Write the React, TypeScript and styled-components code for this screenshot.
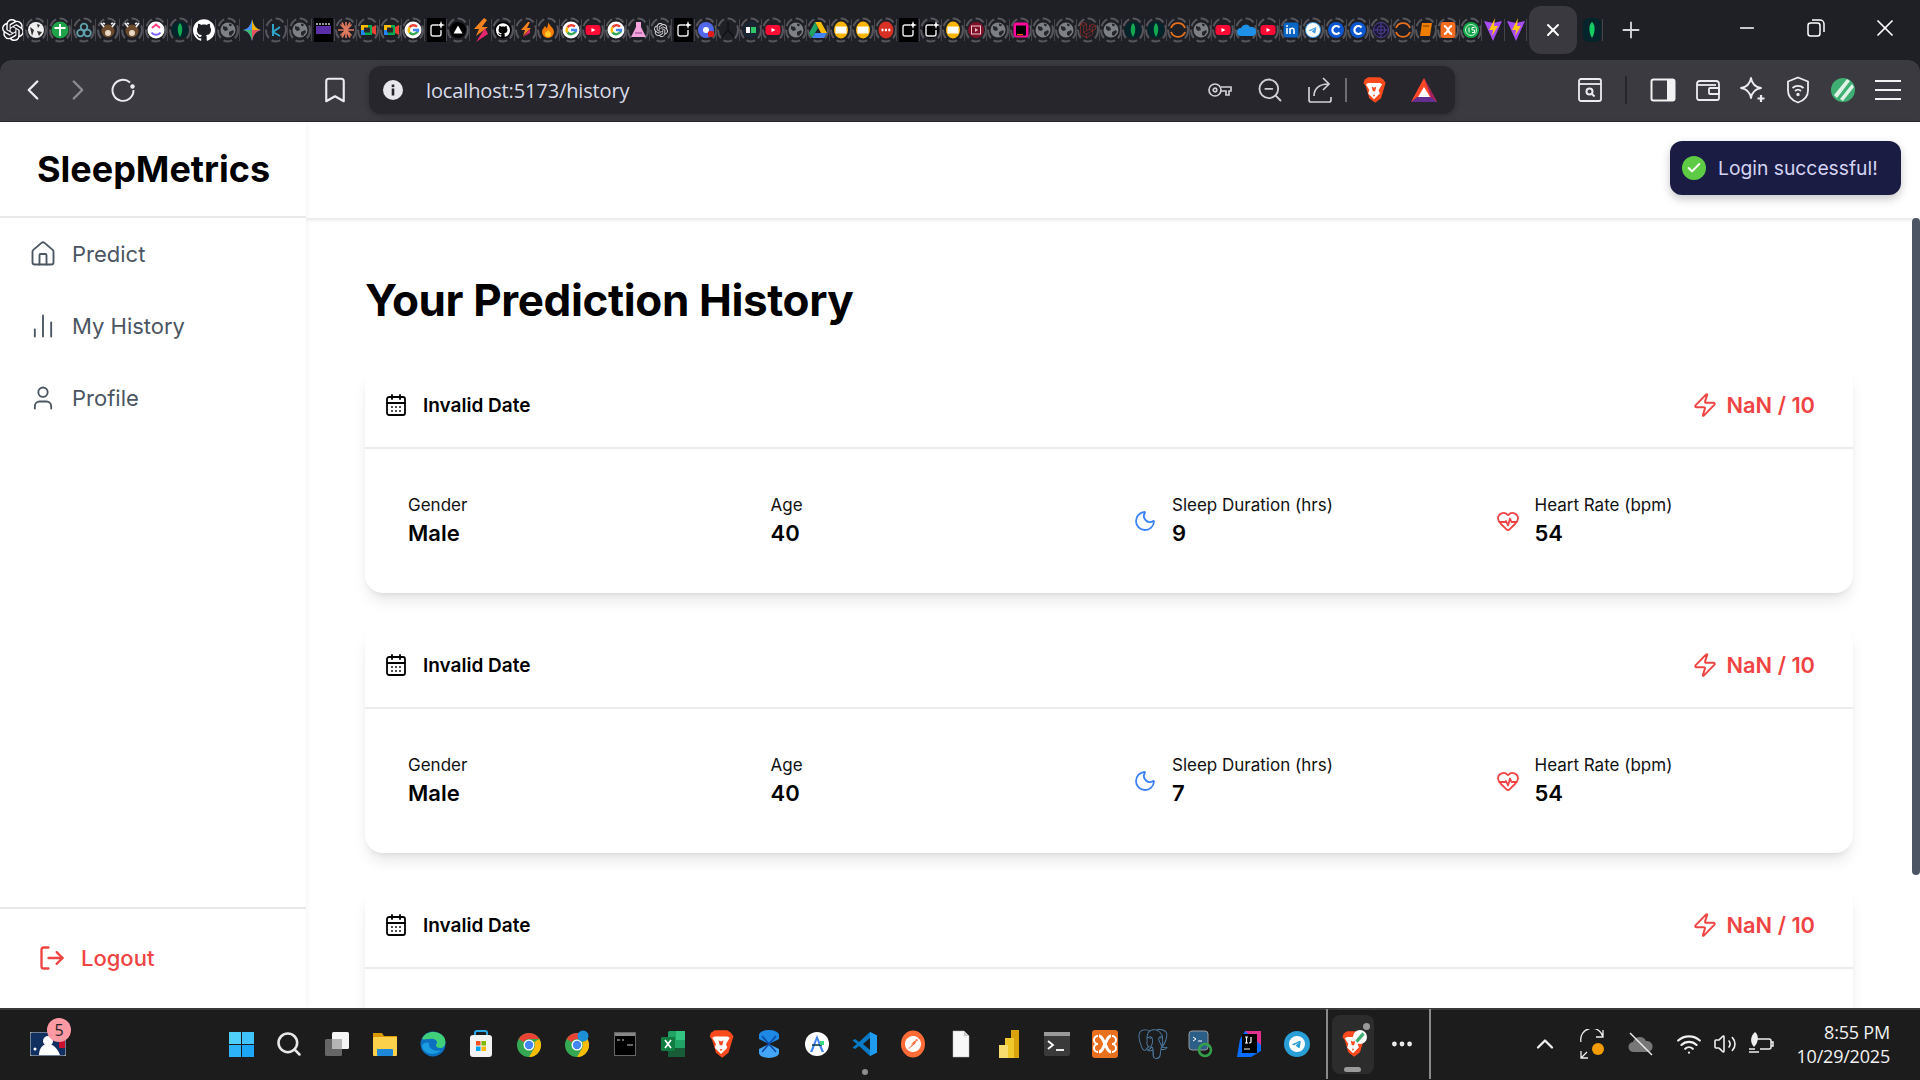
import React from 'react';
import styled, { createGlobalStyle } from 'styled-components';
import {
  House, ChartNoAxesColumn, User, LogOut, CalendarDays, Zap, Moon, HeartPulse,
  ChevronLeft, ChevronRight, Bookmark, ZoomOut, X, Plus, Minus,
  Search, ChevronUp, Wifi, Volume2, Ellipsis, Check,
} from 'lucide-react';
import { SiOpenai, SiGithub, SiLaravel, SiPostman, SiTelegram, SiPostgresql } from 'react-icons/si';

const Global = createGlobalStyle`
  html, body { margin: 0; padding: 0; height: 100%; overflow: hidden; background: #fff; }
  * { box-sizing: border-box; }
  #root { width: 1920px; height: 1080px; }
`;

const Frame = styled.div`
  width: 1920px; height: 1080px; display: flex; flex-direction: column; overflow: hidden;
  background: #1f1f26; font-family: Inter, "Liberation Sans", sans-serif; position: relative;
`;

/* ---------- tab strip ---------- */
const TabStrip = styled.div`
  height: 60px; flex: none; display: flex; align-items: flex-start; color: #fff;
`;
const TabSlot = styled.div<{ $w: number }>`
  width: ${p => p.$w}px; height: 48px; margin-top: 6px; flex: none; display: flex; align-items: center;
  justify-content: center; position: relative;
  &::after { content: ''; position: absolute; right: 0; top: 13px; height: 22px; width: 1px; background: #44444a; }
`;
const ActiveTab = styled.div`
  width: 48px; height: 48px; margin: 6px 3px 0 2px; border-radius: 12px; background: #39393f; flex: none;
  display: flex; align-items: center; justify-content: center; color: #fff;
`;
const PlusSlot = styled.div`
  width: 56px; height: 48px; margin: 6px 0 0 0; flex: none; display: flex; align-items: center; justify-content: center; color: #d8d8dc;
`;
const WinControls = styled.div`margin-left: auto; display: flex; height: 60px;`;
const WinButton = styled.div<{ $w: number }>`
  width: ${p => p.$w}px; display: flex; align-items: center; justify-content: center; color: #fff; padding-bottom: 4px;
`;

/* ---------- toolbar ---------- */
const Toolbar = styled.div`
  height: 62px; flex: none; display: flex; align-items: center; background: #3a3a40; padding: 0 10px 1px 10px;
  border-radius: 12px 12px 0 0; border-bottom: 1px solid #2b2b30; color: #e6e6ea;
`;
const ToolButton = styled.div<{ $dim?: boolean }>`
  width: 45px; height: 45px; flex: none; display: flex; align-items: center; justify-content: center;
  color: ${p => (p.$dim ? '#8b8b90' : '#ececf0')};
`;
const BookmarkSlot = styled(ToolButton)`margin-left: 167px;`;
const UrlBar = styled.div`
  width: 1086px; height: 48px; margin-left: 12px; flex: none; background: #26262c; border-radius: 12px;
  display: flex; align-items: center; padding: 0 6px 0 14px; box-shadow: 0 2px 6px rgba(0,0,0,.25);
`;
const UrlText = styled.div`
  margin-left: 23px; font: 400 20px "Open Sans", sans-serif; letter-spacing: -0.13px; color: #d9dbe8;
`;
const UrlTools = styled.div`margin-left: auto; display: flex; align-items: center;`;
const UrlSlot = styled.div`
  width: 50px; height: 40px; display: flex; align-items: center; justify-content: center; color: #cfcfd4;
`;
const VBar = styled.div<{ $c?: string; $h?: number; $ml?: number; $mr?: number }>`
  width: 2px; flex: none; height: ${p => p.$h ?? 24}px; background: ${p => p.$c ?? '#6d6d72'};
  margin-left: ${p => p.$ml ?? 0}px; margin-right: ${p => p.$mr ?? 0}px;
`;
const ToolsRight = styled.div`margin-left: auto; display: flex; align-items: center;`;

/* ---------- application ---------- */
const AppArea = styled.div`flex: 1; min-height: 0; display: flex; background: #fff; position: relative;`;
const Sidebar = styled.aside`
  width: 306px; flex: none; display: flex; flex-direction: column; background: #fff; z-index: 2;
  box-shadow: 1px 0 6px rgba(0,0,0,.05);
`;
const Brand = styled.div`
  height: 96px; flex: none; border-bottom: 2px solid #e8e8ea; display: flex; align-items: center; justify-content: center;
  font-weight: 700; font-size: 36px; color: #000; padding: 0 0 1px 1px;
`;
const Nav = styled.nav`display: flex; flex-direction: column;`;
const NavItem = styled.div`
  height: 72px; display: flex; align-items: center; gap: 15px; padding: 0 0 1px 29px; color: #4b5563; font-size: 22px; font-weight: 400;
`;
const SidebarFoot = styled.div`
  margin-top: auto; height: 101px; border-top: 2px solid #e8e8ea; display: flex; align-items: center; gap: 15px;
  padding: 0 0 1px 38px; color: #ef4444; font-size: 22px; font-weight: 500;
`;
const MainColumn = styled.div`flex: 1; min-width: 0; display: flex; flex-direction: column;`;
const TopBar = styled.header`
  height: 96px; flex: none; background: #fff; box-shadow: 0 1px 5px rgba(0,0,0,.14); z-index: 1;
`;
const Scroller = styled.main`
  flex: 1; min-height: 0; overflow: hidden; padding: 49px 67px 48px 59px;
`;
const ScrollThumb = styled.div`
  position: absolute; right: 0; top: 96px; width: 8px; height: 657px; border-radius: 5px; background: #4b5563; z-index: 3;
`;
const Title = styled.h1`
  margin: 0 0 31px; font-size: 44px; line-height: 67px; font-weight: 700; color: #000; letter-spacing: -0.38px;
`;
const Cards = styled.div`display: flex; flex-direction: column; gap: 32px;`;
const Card = styled.section`
  background: #fff; border-radius: 18px; height: 228px; flex: none; display: flex; flex-direction: column;
  box-shadow: 0 10px 15px -3px rgba(0,0,0,.1), 0 4px 6px -4px rgba(0,0,0,.1);
`;
const CardHead = styled.div`
  height: 84px; flex: none; border-bottom: 2px solid #ececee; display: flex; align-items: center; justify-content: space-between;
  padding: 0 38px 2px 19px;
`;
const DateGroup = styled.div`display: flex; align-items: center; gap: 15px; font-size: 19px; font-weight: 600; color: #000;`;
const ScoreGroup = styled.div`display: flex; align-items: center; gap: 9px; font-size: 21.8px; font-weight: 600; color: #ef4444; padding-bottom: 1px;`;
const CardBody = styled.div`
  flex: 1; display: grid; grid-template-columns: repeat(4, 1fr); column-gap: 48px; padding: 0 43px 1px; align-items: center;
`;
const Stat = styled.div`display: flex; align-items: center; gap: 15px;`;
const StatIcon = styled.div<{ $c: string }>`color: ${p => p.$c}; display: flex; margin-top: 1px;`;
const StatLabel = styled.div`font-size: 17px; line-height: 24px; color: #111; font-weight: 400; padding-top: 1px;`;
const StatValue = styled.div`font-size: 22px; line-height: 32px; color: #000; font-weight: 600;`;

const Toast = styled.div`
  position: absolute; top: 19px; right: 19px; width: 231px; height: 54px; border-radius: 12px; background: #1b1c44; z-index: 5;
  display: flex; align-items: center; gap: 12px; padding: 0 0 1px 12px; color: #d4d4f2; font-size: 19.3px; font-weight: 400;
  box-shadow: 0 4px 10px rgba(0,0,0,.22);
`;
const ToastCheck = styled.div`
  width: 24px; height: 24px; border-radius: 50%; background: #5ecb45; color: #fff; display: flex; align-items: center; justify-content: center;
`;

/* ---------- taskbar ---------- */
const Taskbar = styled.footer`
  height: 72px; flex: none; background: #1c1c1c; border-top: 2px solid #3a3a3a; display: flex; align-items: center; color: #eee; position: relative; padding-bottom: 2px;
`;
const MlbSlot = styled.div`width: 217px; flex: none; padding-left: 30px; display: flex; position: relative;`;
const Badge = styled.div`
  position: absolute; left: 47px; top: -14px; width: 24px; height: 24px; border-radius: 50%; background: #ff9aa5; color: #222;
  font: 400 16px "Open Sans", sans-serif; display: flex; align-items: center; justify-content: center;
`;
const TaskIcon = styled.div`
  width: 48px; height: 48px; flex: none; display: flex; align-items: center; justify-content: center; position: relative;
`;
const RunningDot = styled.div`
  position: absolute; bottom: -7px; left: 21px; width: 6px; height: 6px; border-radius: 50%; background: #8f8f8f;
`;
const TaskDivider = styled.div<{ $ml: number }>`width: 2px; height: 70px; background: #8a8a8a; flex: none; margin-left: ${p => p.$ml}px;`;
const ActiveApp = styled.div`
  width: 42px; height: 59px; flex: none; margin-left: 4px; border-radius: 8px; background: #2c2c2c; position: relative;
  display: flex; align-items: center; justify-content: center;
`;
const ActiveDot = styled.div`position: absolute; right: 4px; top: 8px; width: 7px; height: 7px; border-radius: 50%; background: #9a9a9a;`;
const ActivePill = styled.div`position: absolute; bottom: 2px; left: 12px; width: 17px; height: 5px; border-radius: 3px; background: #9a9a9a;`;
const MoreSlot = styled.div`width: 55px; flex: none; display: flex; justify-content: center; color: #eee;`;
const Tray = styled.div`margin-left: 90px; display: flex; align-items: center;`;
const TraySlot = styled.div<{ $w: number }>`width: ${p => p.$w}px; flex: none; display: flex; justify-content: center; align-items: center; color: #eee;`;
const Clock = styled.div`
  margin-left: auto; padding-right: 30px; text-align: right; font: 400 18px/24px "Open Sans", sans-serif; color: #f2f2f2; letter-spacing: -0.2px;
`;

/* ---------- drawings ---------- */
const BraveLogo = ({ s = 28, mark = false }: { s?: number; mark?: boolean }) => (
  <svg width={s} height={s} viewBox="0 0 24 24" style={{ display: 'block' }}>
    <path d="M4 3l3-2h10l3 2 2 3-1 3-3 10-5 4-5-4L5 9 3 6z" fill="#fb4a1e" />
    <path d="M7 6h10l2 1-3 5 1 3-5 5-5-5 1-3-3-5z" fill="#fff" />
    <path d="M10 9l2 1 2-1-1 4h-2zM11 16h2l-1 2z" fill="#fb4a1e" />
    {mark && <g><circle cx="18" cy="6" r="6" fill="#fff" /><path d="M14 9l6-7 2 2-6 7z" fill="#3fae72" /></g>}
  </svg>
);
const BatLogo = () => (
  <svg width="28" height="26" viewBox="0 0 28 26">
    <path d="M14 1L1 25h26z" fill="#ff4724" />
    <path d="M14 1l13 24-6-5z" fill="#9e1f63" />
    <path d="M1 25h26l-6-5H7z" fill="#662d91" />
    <path d="M14 10l6 10H8z" fill="#fff" />
  </svg>
);
const Stripes = ({ s = 24 }: { s?: number }) => (
  <svg width={s} height={s} viewBox="0 0 24 24">
    <circle cx="12" cy="12" r="12" fill="#3fae72" />
    <path d="M3 17L16 1l3 2L6 20zM9 21L21 6l2 3-11 14z" fill="#dff3e6" />
  </svg>
);
const Reload = () => (
  <svg width="28" height="28" viewBox="0 0 28 28" fill="none" stroke="#ececf0" strokeWidth="1.900">
    <path d="M21 6.500A10.500 10.500 0 1 0 24.500 14" />
    <circle cx="23.500" cy="10.500" r="2.200" fill="#ececf0" stroke="none" />
  </svg>
);

const GLogo = () => (
  <g fill="none" strokeWidth="2.400">
    <circle cx="11" cy="12" r="8.500" fill="#fff" stroke="none" />
    <path d="M15 8.600A5 5 0 0 0 7.500 9.300" stroke="#ea4335" />
    <path d="M7.500 9.300a5 5 0 0 0 0 5.400" stroke="#fbbc05" />
    <path d="M7.500 14.700A5 5 0 0 0 15.500 13.500" stroke="#34a853" />
    <path d="M11 12h5a5 5 0 0 1-.5 2" stroke="#4285f4" />
  </g>
);
const Yt = () => (<g><rect x="3.500" y="7" width="15" height="10" rx="3" fill="#ff0a35" /><path d="M9.500 10l4 2-4 2z" fill="#fff" /></g>);
const Globe = () => (
  <g><circle cx="11" cy="12" r="7.500" fill="#7d8085" /><path d="M6 8l4 1 1 3-3 1-2-2zM12 14l4-2 1 2-3 4-2-1zM12 5.500l3 1-1 2-2-1z" fill="#26262c" /></g>
);
const Sheet = ({ c }: { c: string }) => (<g><ellipse cx="11" cy="12" rx="7" ry="8.500" fill={c} /><rect x="5.500" y="8.500" width="11" height="7" fill="#fff" /></g>);
const Mongo = () => (<g><circle cx="11" cy="12" r="8.500" fill="#04242b" /><path d="M11 5c3 3 3 9 0 14-3-5-3-11 0-14z" fill="#13aa52" /></g>);
const Sparkle = ({ bg = true }: { bg?: boolean }) => (
  <g>
    {bg ? <rect x="2" y="0" width="19" height="24" fill="#000" /> : <circle cx="11" cy="12" r="8" fill="#000" />}
    <path d="M13 7H8a2 2 0 0 0-2 2v7a2 2 0 0 0 2 2h6a2 2 0 0 0 2-2v-4" fill="none" stroke="#eee" strokeWidth="1.400" />
    <path d="M16 3l1 3 3 1-3 1-1 3-1-3-3-1 3-1z" fill="#fff" />
  </g>
);
const Arcs = () => (<g fill="none" stroke="#e8711c" strokeWidth="1.800"><path d="M4 10a7.500 7.500 0 0 1 14 0" /><path d="M4 14a7.500 7.500 0 0 0 14 0" /></g>);
const Vite = () => (<g><path d="M2 3l9 2 9-2-9 20z" fill="#a64cf4" /><path d="M13 0L7 12h4l-1 6 6-10h-4z" fill="#ffc517" /></g>);
const Meet = () => (<g><rect x="4" y="7" width="11" height="10" fill="#00a94f" /><path d="M4 7h7v5H4z" fill="#fbbc04" /><path d="M4 12h4v5H4z" fill="#2684fc" /><path d="M15 9l4-2v10l-4-2z" fill="#ea4335" /><rect x="7" y="9.500" width="6" height="5" fill="#24242a" /></g>);
const FireBolt = ({ big }: { big?: boolean }) => (
  <g><path d={big ? 'M14 0L4 11h5L6 18l12-9h-6l5-7z' : 'M13 4L6 12h4l-2 6 8-8h-4l3-6z'} fill="#f5821f" /><path d={big ? 'M15 10L6 24l12-8z' : 'M15 11l-7 8 7-4z'} fill="#e4276b" /></g>
);
const CLogo = () => (<g><circle cx="11" cy="12" r="8" fill="#0b57d0" /><path d="M14.500 9.500a4 4 0 1 0 0 5" fill="none" stroke="#fff" strokeWidth="2.200" /></g>);

const favs: Record<string, React.ReactNode> = {
  gpt: <SiOpenai x={1} y={1} size={22} color="#fff" />,
  blob: <g><circle cx="11" cy="12" r="8" fill="#eee" /><path d="M5 9l4 3-2 6zM12 6l3 1-2 3zM12 13l5 1-3 4z" fill="#33302e" /></g>,
  plus: <g><circle cx="11" cy="12" r="8.500" fill="#1fa24a" /><path d="M11 6v12M5.500 10h11" stroke="#fff" strokeWidth="1.800" /></g>,
  rings: <g fill="none" stroke="#5fa3ad" strokeWidth="1.800"><circle cx="11" cy="9" r="3.300" /><circle cx="7.500" cy="15" r="3.300" /><circle cx="14.500" cy="15" r="3.300" /></g>,
  bull: <g><circle cx="11" cy="13" r="6.500" fill="#6c4a2d" /><path d="M4 5l3 4M18 5l-3 4M6 5l2 1M16 5l-2 1" stroke="#eee" strokeWidth="1.800" /><circle cx="11" cy="15" r="3" fill="#e8d8c4" /></g>,
  click: <g><circle cx="11" cy="12" r="8.500" fill="#fff" /><path d="M7 10l4-3.500 4 3.500" fill="none" stroke="#ff3d7f" strokeWidth="2" /><path d="M6.500 14.500a5.500 5.500 0 0 0 9 0" fill="none" stroke="#7b5cff" strokeWidth="2" /></g>,
  mongo: <Mongo />,
  mongoBare: <g><rect x="2" y="0" width="18" height="24" rx="6" fill="#04242b" /><path d="M11 4c3.500 3 3.500 10 0 16-3.500-6-3.500-13 0-16z" fill="#13cc62" /></g>,
  ghbig: <SiGithub x={0} y={1} size={22} color="#fff" />,
  globe: <Globe />,
  gem: <g><path d="M11 1c1 6 4 10 9 11-5 1-8 5-9 11-1-6-4-10-9-11 5-1 8-5 9-11z" fill="#4b8df8" /><path d="M11 1c1 6 4 10 9 11h-9z" fill="#f4b400" /><path d="M11 23c1-6 4-10 9-11h-9z" fill="#e8545c" /><path d="M11 23c-1-6-4-10-9-11h9z" fill="#3dba76" /></g>,
  k: <g><path d="M8 6v12M15 9l-7 5 7 4" fill="none" stroke="#2fa4c7" strokeWidth="2" /></g>,
  pixel: <g><rect x="2" y="0" width="19" height="24" fill="#000" /><rect x="4" y="8" width="15" height="8" fill="#5a2ea6" /><path d="M4 6h15" stroke="#9a9a9a" strokeDasharray="2 1" strokeWidth="2" /></g>,
  star: <g stroke="#e07a5f" strokeWidth="1.600"><path d="M11 4v16M3 12h16M5.500 6.500l11 11M16.500 6.500l-11 11M7 4.500l8 15M15 4.500l-8 15" /></g>,
  meet: <Meet />,
  g: <GLogo />,
  spark: <Sparkle />,
  sparkr: <Sparkle bg={false} />,
  tri: <g><circle cx="11" cy="12" r="8" fill="#000" /><path d="M11 7.500l4.500 8h-9z" fill="#fff" /></g>,
  fire: <FireBolt big />,
  gh: <g><circle cx="11" cy="12" r="8.500" fill="#000" /><SiGithub x={4} y={5} size={14} color="#fff" /></g>,
  bolt: <FireBolt />,
  flame: <g><path d="M11 4c1 3 6 6 6 10a6 6 0 0 1-12 0c0-3 2-4 3-6 1 1 1 2 2 2 1-2 1-4 1-6z" fill="#f57c00" /><path d="M11 12c2 2 3 3 3 4a3 3 0 0 1-6 0c0-2 2-2 3-4z" fill="#ffca28" /></g>,
  yt: <Yt />,
  flask: <g><path d="M9 4h5v5l5 10H4l5-10z" fill="#f3a4dc" /><path d="M8 15h7" stroke="#8e3a80" /></g>,
  gptg: <SiOpenai x={4} y={5} size={14} color="#ddd" />,
  dup: <g><circle cx="11" cy="12" r="8" fill="#5368e8" /><circle cx="11" cy="12" r="3" fill="#fff" /><rect x="13" y="13" width="6" height="6" rx="2" fill="#e21b1b" /></g>,
  aa: <g stroke="#111" strokeWidth="1.400" fill="none"><path d="M11 4v8l-6 7M11 12l6 7" /></g>,
  h: <g><circle cx="11" cy="12" r="8.500" fill="#1a2432" /><rect x="6" y="9" width="4" height="6" fill="#fff" /><rect x="11" y="9" width="5" height="6" fill="#32c766" /></g>,
  drive: <g><path d="M8 4h6l6 11h-6z" fill="#fbbc04" /><path d="M8 4l-6 11 3 5 6-10z" fill="#1fa463" /><path d="M5 20h12l3-5H8z" fill="#4285f4" /></g>,
  yellow: <Sheet c="#fbb400" />,
  dots: <g><ellipse cx="11" cy="12" rx="7.500" ry="8.500" fill="#d93025" /><path d="M6.500 12h9" stroke="#fff" strokeWidth="2.400" strokeDasharray="2 1.400" /></g>,
  wine: <g><circle cx="11" cy="12" r="8" fill="#7d1128" /><rect x="6.500" y="8" width="9" height="8" fill="none" stroke="#f2c3cc" /><path d="M10 10l3 2-3 2z" fill="#f2c3cc" /></g>,
  jet: <g><rect x="3.500" y="4.500" width="15" height="15" rx="3" fill="#ff0a9c" /><rect x="6" y="7.500" width="10" height="10" fill="#000" /><rect x="7" y="16" width="6" height="1.200" fill="#ff5e00" /></g>,
  laravel: <SiLaravel x={3} y={4} size={16} color="#b3332c" />,
  cloud: <path d="M6 18a4 4 0 0 1 0-8 5 5 0 0 1 9-1 4.500 4.500 0 0 1 3 9z" fill="#1e90e8" />,
  arcs: <Arcs />,
  in: <g><rect x="3.500" y="4.500" width="15" height="15" rx="3" fill="#0a66c2" /><path d="M7 10v6M10 16v-6M10 12c1-2.500 4-2 4 0v4" fill="none" stroke="#fff" strokeWidth="1.600" /><circle cx="7" cy="8" r="1" fill="#fff" /></g>,
  tg: <g><circle cx="11" cy="12" r="8" fill="#4a9fe8" /><SiTelegram x={4} y={5} size={14} color="#fff" /></g>,
  c: <CLogo />,
  web3: <g fill="none" stroke="#4c3f8f"><circle cx="11" cy="12" r="7.500" fill="#1d1836" /><circle cx="11" cy="12" r="4" /><path d="M11 4.500v15M3.500 12h15" /></g>,
  book: <g><path d="M7 5h10l-2 13H5z" fill="#ef7d00" /><path d="M8 8h6" stroke="#7d4100" /></g>,
  xampp: <g><rect x="3.500" y="4" width="15" height="16" rx="3" fill="#f26d21" /><path d="M7 8c2 0 3 2 4 4s2 4 4 4M15 8c-2 0-3 2-4 4s-2 4-4 4" fill="none" stroke="#fff" strokeWidth="2" /></g>,
  n15: <g><circle cx="11" cy="12" r="8" fill="#12a84a" /><circle cx="11" cy="12" r="5.500" fill="none" stroke="#fff" strokeWidth=".8" /><path d="M9 9.500v5M12 9.500h2.500M12 9.500v2.500h2.500v2.500H12" fill="none" stroke="#fff" strokeWidth="1" /></g>,
  vite: <Vite />,
};

const noRing = new Set(['ghbig', 'gem', 'pixel', 'spark', 'gpt', 'vite', 'fire', 'mongoBare']);
const tabKinds = [
  'gpt', 'blob', 'plus', 'rings', 'bull', 'bull', 'click', 'mongo', 'ghbig', 'globe', 'gem', 'k', 'globe',
  'pixel', 'star', 'meet', 'meet', 'g', 'spark', 'tri', 'fire', 'gh', 'bolt', 'flame', 'g', 'yt', 'g', 'flask',
  'gptg', 'spark', 'dup', 'aa', 'h', 'yt', 'globe', 'drive', 'yellow', 'yellow', 'dots', 'spark', 'sparkr', 'yellow',
  'wine', 'globe', 'jet', 'globe', 'globe', 'laravel', 'globe', 'mongo', 'mongo', 'arcs', 'globe', 'yt', 'cloud', 'yt',
  'in', 'tg', 'c', 'c', 'web3', 'arcs', 'book', 'xampp', 'n15', 'vite', 'vite',
];
const Fav = ({ k }: { k: string }) => (
  <svg width="22" height="24" viewBox="0 0 22 24" style={{ display: 'block', overflow: 'visible' }}>
    {!noRing.has(k) && (
      <ellipse cx="11" cy="12" rx="10" ry="11.500" fill="none" stroke="#56565c" strokeWidth="2" strokeDasharray="9 3.500" />
    )}
    {favs[k]}
  </svg>
);

const SearchWindow = () => (
  <svg width="26" height="26" viewBox="0 0 26 26" fill="none" stroke="#ececf0" strokeWidth="1.800">
    <rect x="2" y="2" width="22" height="22" rx="2" /><path d="M2 7h22" />
    <circle cx="12.500" cy="14.500" r="3" strokeWidth="2" /><path d="M15 17l2.500 2.500" strokeWidth="2" />
  </svg>
);
const SidePanel = () => (
  <svg width="26" height="26" viewBox="0 0 26 26"><rect x="1.500" y="2.500" width="23" height="21" rx="2" fill="none" stroke="#f2f2f2" strokeWidth="2" /><rect x="17" y="2.500" width="7" height="21" fill="#f2f2f2" /></svg>
);
const Wallet = () => (
  <svg width="26" height="26" viewBox="0 0 26 26" fill="none" stroke="#ececf0" strokeWidth="1.800"><path d="M2 7a3 3 0 0 1 3-3h16a3 3 0 0 1 3 3v14a2 2 0 0 1-2 2H4a2 2 0 0 1-2-2z" /><path d="M2 8h19" /><rect x="14" y="11" width="10" height="6" rx="1" /></svg>
);
const Leo = () => (
  <svg width="28" height="28" viewBox="0 0 28 28" fill="none" stroke="#ececf0" strokeWidth="1.800"><path d="M12 2c1 6 4 9 10 10-6 1-9 4-10 10-1-6-4-9-10-10 6-1 9-4 10-10z" strokeLinejoin="round" /><path d="M22 19v7M18.500 22.500h7" strokeWidth="2.200" /></svg>
);
const ShieldWifi = () => (
  <svg width="26" height="28" viewBox="0 0 26 28" fill="none" stroke="#ececf0" strokeWidth="1.800"><path d="M13 1.500l10 4v9c0 6-4 10-10 12-6-2-10-6-10-12v-9z" /><path d="M7.500 12a8 8 0 0 1 11 0M10 15a4.500 4.500 0 0 1 6 0" /><circle cx="13" cy="18.500" r=".8" fill="#ececf0" /></svg>
);
const Burger = () => (
  <svg width="26" height="22" viewBox="0 0 26 22" stroke="#f2f2f2" strokeWidth="2"><path d="M0 2h26M0 11h26M0 20h26" /></svg>
);
const ShareIcon = () => (
  <svg width="24" height="26" viewBox="0 0 24 26" fill="none" stroke="#cfcfd4" strokeWidth="1.700"><path d="M1 10v13a2 2 0 0 0 2 2h18a2 2 0 0 0 2-2v-3" /><path d="M6 19c0-7 5-12 14-12M15 1l6 6-6 6" /></svg>
);
const KeyIcon = () => (
  <svg width="24" height="16" viewBox="0 0 24 16" fill="none" stroke="#cfcfd4" strokeWidth="1.700"><circle cx="7" cy="8" r="6" /><circle cx="7" cy="8" r="1.800" /><path d="M13 5h10v4h-2v4h-3V9h-5" /></svg>
);

const Mlb = () => (
  <svg width="36" height="24" viewBox="0 0 36 24"><rect width="36" height="24" rx="2" fill="#12305f" stroke="#ccc" /><rect x="29" y="1" width="6" height="15" fill="#c8102e" /><circle cx="18" cy="9" r="5" fill="#fff" /><path d="M9 23c0-8 5-11 9-11s9 3 12 11z" fill="#fff" /><circle cx="5" cy="17" r="1.500" fill="#fff" /></svg>
);
const WinLogo = () => (
  <svg width="25" height="25" viewBox="0 0 25 25"><rect width="12" height="12" fill="#4fd0fb" /><rect x="13" width="12" height="12" fill="#3fc3fa" /><rect y="13" width="12" height="12" fill="#2db4f8" /><rect x="13" y="13" width="12" height="12" fill="#1ca4f5" /></svg>
);
const TaskView = () => (
  <svg width="26" height="26" viewBox="0 0 26 26"><rect x="8" y="1" width="17" height="17" rx="1.500" fill="#f4f4f4" /><rect x="1" y="8" width="17" height="17" rx="1.500" fill="#666" /><rect x="8" y="8" width="10" height="10" fill="#b5b5b5" /></svg>
);
const Explorer = () => (
  <svg width="26" height="26" viewBox="0 0 26 26"><path d="M1 2h9l2 3h13v5H1z" fill="#d99a00" /><rect x="1" y="6" width="24" height="19" rx="1" fill="#fbd14b" /><rect x="5" y="18" width="16" height="7" rx="1" fill="#1e88d8" /></svg>
);
const Edge = () => (
  <svg width="26" height="28" viewBox="0 0 26 28"><circle cx="13" cy="14" r="12.500" fill="#0c6fc0" /><path d="M2 9C5 1 18-1 24 7c3 5 1 11-4 11-4 0-5-3-3-5 1-2-3-5-7-4-4 0-6 1-8 0z" fill="#41d07a" /><path d="M9 14c0 6 7 8 12 6-6 7-19 4-19-5 3-3 7-3 7-1z" fill="#1b9de2" /></svg>
);
const Store = () => (
  <svg width="24" height="28" viewBox="0 0 24 28"><path d="M6 6V3a2 2 0 0 1 2-2h8a2 2 0 0 1 2 2v3" fill="none" stroke="#2aa8e8" strokeWidth="2" /><rect x="1" y="5" width="22" height="22" rx="3" fill="#f3f3f3" /><rect x="7" y="11" width="4.500" height="4.500" fill="#f25022" /><rect x="12.500" y="11" width="4.500" height="4.500" fill="#7fba00" /><rect x="7" y="16.500" width="4.500" height="4.500" fill="#00a4ef" /><rect x="12.500" y="16.500" width="4.500" height="4.500" fill="#ffb900" /></svg>
);
const Chrome = ({ dev = false }: { dev?: boolean }) => (
  <svg width="26" height="28" viewBox="0 0 26 28">
    <circle cx="13" cy="15" r="12" fill="#34a853" />
    <path d="M13 3a12 12 0 0 1 10.400 6H13a6 6 0 0 0-5.200 3L2.600 9A12 12 0 0 1 13 3z" fill="#ea4335" />
    <path d="M23.400 9A12 12 0 0 1 13 27l5.200-9a6 6 0 0 0 0-6z" fill="#fbbc05" />
    <circle cx="13" cy="15" r="5.500" fill="#fff" /><circle cx="13" cy="15" r="4.200" fill="#4285f4" />
    {dev && <circle cx="19" cy="6" r="5.500" fill="#1d8fd8" />}
  </svg>
);
const Cmd = () => (
  <svg width="22" height="24" viewBox="0 0 22 24"><rect x=".5" y=".5" width="21" height="23" fill="#000" stroke="#666" /><rect x="1" y="1" width="20" height="3" fill="#888" /><path d="M3 8h3M8 8h2M13 13h6" stroke="#ccc" strokeWidth="1.200" /></svg>
);
const Excel = () => (
  <svg width="26" height="28" viewBox="0 0 26 28"><rect x="8" y="1" width="17" height="26" rx="1.500" fill="#21a366" /><rect x="16" y="1" width="9" height="9" fill="#33c481" /><rect x="8" y="18" width="17" height="9" fill="#185c37" /><rect x="1" y="7" width="14" height="14" rx="1" fill="#107c41" /><path d="M5 10l6 8M11 10l-6 8" stroke="#fff" strokeWidth="1.700" /></svg>
);
const Hourglass = () => (
  <svg width="22" height="30" viewBox="0 0 22 30"><path d="M1 6a10 5 0 0 1 20 0v4l-10 5L1 10z" fill="#1e88e5" /><path d="M1 24a10 5 0 0 0 20 0v-4l-10-5-10 5z" fill="#42a5f5" /><path d="M4 7l14 16M18 7L4 23" stroke="#0d47a1" strokeWidth="1.500" /></svg>
);
const Studio = () => (
  <svg width="24" height="28" viewBox="0 0 24 28"><circle cx="12" cy="14" r="12" fill="#fff" /><path d="M12 5l7 17h-2.500l-4.500-12-4.500 12H5z" fill="#4285f4" /><path d="M7 15h10" stroke="#073042" strokeWidth="1.500" /><rect x="15" y="11" width="4" height="4" fill="#3ddc84" /></svg>
);
const VsCode = () => (
  <svg width="26" height="26" viewBox="0 0 26 26"><path d="M18 1l7 3.400v17.200L18 25 7 15l-4 3-2.500-1.500L5 13 .5 9.500 3 8l4 3z" fill="#0a7bc6" /><path d="M18 7l-7 6 7 6z" fill="#1c1c1c" /><path d="M18 1l7 3.400v17.200L18 25z" fill="#1f9cf0" /></svg>
);
const Postman = () => (
  <svg width="26" height="28" viewBox="0 0 26 28"><ellipse cx="13" cy="14" rx="12" ry="13.500" fill="#ff6c37" /><SiPostman x={5} y={6} size={16} color="#fff" /></svg>
);
const FileIcon = () => (
  <svg width="18" height="28" viewBox="0 0 18 28"><path d="M1 1h11l5 5v21H1z" fill="#f8f8f8" stroke="#bbb" strokeWidth=".5" /><path d="M12 1v5h5z" fill="#ccc" /></svg>
);
const PowerBi = () => (
  <svg width="20" height="28" viewBox="0 0 20 28"><rect x="12" y="0" width="8" height="28" fill="#d9a30f" /><rect x="6" y="8" width="9" height="20" fill="#f0c82c" /><rect x="0" y="15" width="9" height="13" fill="#f8dd6e" /></svg>
);
const Term = () => (
  <svg width="26" height="24" viewBox="0 0 26 24"><rect width="26" height="24" rx="2" fill="#3a3a3a" /><rect width="26" height="4" fill="#9a9a9a" /><path d="M4 9l5 4-5 4" fill="none" stroke="#fff" strokeWidth="1.800" /><path d="M12 18h8" stroke="#fff" strokeWidth="1.800" /></svg>
);
const Xampp = () => (
  <svg width="26" height="28" viewBox="0 0 26 28"><rect width="26" height="28" rx="3" fill="#e8701f" /><path d="M7 6c3 0 4 4 6 8s3 8 6 8M19 6c-3 0-4 4-6 8s-3 8-6 8" fill="none" stroke="#fff" strokeWidth="3" /><path d="M6 6a3 3 0 0 0 0 8 3 3 0 0 0 0 8M20 6a3 3 0 0 1 0 8 3 3 0 0 1 0 8" fill="none" stroke="#fff" strokeWidth="2" /></svg>
);
const PgAdmin = () => (
  <svg width="26" height="28" viewBox="0 0 26 28"><rect x="1" y="1" width="19" height="19" rx="3" fill="#2c5f88" stroke="#999" /><path d="M5 7l3 2-3 2M10 11h4" stroke="#fff" fill="none" /><circle cx="17" cy="20" r="6" fill="none" stroke="#35a04a" strokeWidth="2.500" /></svg>
);
const Idea = () => (
  <svg width="24" height="26" viewBox="0 0 24 26"><path d="M3 8L0 26h14l10-6V0H8z" fill="#0a6cff" /><path d="M8 0h16v14z" fill="#e0318f" /><rect x="5" y="3" width="15" height="19" fill="#000" /><path d="M8 6h3M9.500 6v6M8 12h3M14 6v5a2 2 0 0 1-2 1M7 18h6" stroke="#fff" strokeWidth="1.200" fill="none" /></svg>
);
const Sync = () => (
  <svg width="28" height="30" viewBox="0 0 28 30" fill="none" stroke="#eee" strokeWidth="1.300"><path d="M2 13A11 11 0 0 1 24 8M24 1v7h-7M2 22v7h7M2 29l6-6" /><circle cx="19" cy="20" r="6" fill="#f59c00" stroke="none" /></svg>
);
const CloudOff = () => (
  <svg width="26" height="26" viewBox="0 0 26 26"><path d="M6 21a5 5 0 0 1-1-10 7 7 0 0 1 13-1 5.500 5.500 0 0 1 2 11z" fill="#777" /><path d="M2 2l22 22" stroke="#eee" strokeWidth="1.400" /></svg>
);
const Battery = () => (
  <svg width="26" height="26" viewBox="0 0 26 26" fill="none" stroke="#eee" strokeWidth="1.500"><path d="M8 8h13a2 2 0 0 1 2 2v6a2 2 0 0 1-2 2H12M1 18h6M1 21h10" /><path d="M23 11h2v4h-2" /><path d="M7 1c4 3 4 10-1 15-4-4-4-11 1-15z" fill="#eee" stroke="none" /></svg>
);

const records = [
  { id: 1, sleep: 9, visible: true },
  { id: 2, sleep: 7, visible: true },
  { id: 3, sleep: 8, visible: false },
];

export default function App() {
  return (
    <Frame>
      <Global />
      <TabStrip>
        {tabKinds.map((k, i) => (
          <TabSlot key={i} $w={i < 13 ? 24 : 22.5}><Fav k={k} /></TabSlot>
        ))}
        <ActiveTab><X size={20} strokeWidth={2.400} /></ActiveTab>
        <TabSlot $w={23}><Fav k="mongoBare" /></TabSlot>
        <PlusSlot><Plus size={26} strokeWidth={1.700} /></PlusSlot>
        <WinControls>
          <WinButton $w={70}><Minus size={22} strokeWidth={1.600} /></WinButton>
          <WinButton $w={68}><svg width="18" height="18" viewBox="0 0 18 18" fill="none" stroke="#fff" strokeWidth="1.500"><rect x="1" y="4" width="12" height="13" rx="2.500" /><path d="M5 1h8a4 4 0 0 1 4 4v8" /></svg></WinButton>
          <WinButton $w={70}><X size={28} strokeWidth={1.500} /></WinButton>
        </WinControls>
      </TabStrip>
      <Toolbar>
        <ToolButton><ChevronLeft size={34} strokeWidth={1.700} /></ToolButton>
        <ToolButton $dim><ChevronRight size={34} strokeWidth={1.700} /></ToolButton>
        <ToolButton><Reload /></ToolButton>
        <BookmarkSlot><Bookmark size={30} strokeWidth={1.700} /></BookmarkSlot>
        <UrlBar>
          <svg width="20" height="20" viewBox="0 0 20 20"><circle cx="10" cy="10" r="10" fill="#e8e8ec" /><rect x="8.700" y="8.500" width="2.600" height="7" fill="#26262c" /><rect x="8.700" y="4.500" width="2.600" height="2.600" fill="#26262c" /></svg>
          <UrlText>localhost:5173/history</UrlText>
          <UrlTools>
            <UrlSlot><KeyIcon /></UrlSlot>
            <UrlSlot><ZoomOut size={28} strokeWidth={1.600} /></UrlSlot>
            <UrlSlot><ShareIcon /></UrlSlot>
            <VBar $mr={2} />
            <UrlSlot><BraveLogo /></UrlSlot>
            <UrlSlot><BatLogo /></UrlSlot>
          </UrlTools>
        </UrlBar>
        <ToolsRight>
          <ToolButton><SearchWindow /></ToolButton>
          <VBar $c="#26262c" $h={28} $ml={13} $mr={13} />
          <ToolButton><SidePanel /></ToolButton>
          <ToolButton><Wallet /></ToolButton>
          <ToolButton><Leo /></ToolButton>
          <ToolButton><ShieldWifi /></ToolButton>
          <ToolButton><Stripes /></ToolButton>
          <ToolButton><Burger /></ToolButton>
        </ToolsRight>
      </Toolbar>
      <AppArea>
        <Sidebar>
          <Brand>SleepMetrics</Brand>
          <Nav>
            <NavItem><House size={28} strokeWidth={1.600} />Predict</NavItem>
            <NavItem><ChartNoAxesColumn size={28} strokeWidth={1.600} />My History</NavItem>
            <NavItem><User size={28} strokeWidth={1.600} />Profile</NavItem>
          </Nav>
          <SidebarFoot><LogOut size={28} strokeWidth={2} />Logout</SidebarFoot>
        </Sidebar>
        <MainColumn>
          <TopBar />
          <Scroller>
            <Title>Your Prediction History</Title>
            <Cards>
              {records.map(r => (
                <Card key={r.id}>
                  <CardHead>
                    <DateGroup><CalendarDays size={24} strokeWidth={1.800} />Invalid Date</DateGroup>
                    <ScoreGroup><Zap size={26} strokeWidth={1.800} />NaN / 10</ScoreGroup>
                  </CardHead>
                  {r.visible && (
                    <CardBody>
                      <Stat><div><StatLabel>Gender</StatLabel><StatValue>Male</StatValue></div></Stat>
                      <Stat><div><StatLabel>Age</StatLabel><StatValue>40</StatValue></div></Stat>
                      <Stat>
                        <StatIcon $c="#3b82f6"><Moon size={24} strokeWidth={1.800} /></StatIcon>
                        <div><StatLabel>Sleep Duration (hrs)</StatLabel><StatValue>{r.sleep}</StatValue></div>
                      </Stat>
                      <Stat>
                        <StatIcon $c="#ef4444"><HeartPulse size={24} strokeWidth={1.800} /></StatIcon>
                        <div><StatLabel>Heart Rate (bpm)</StatLabel><StatValue>54</StatValue></div>
                      </Stat>
                    </CardBody>
                  )}
                </Card>
              ))}
            </Cards>
          </Scroller>
        </MainColumn>
        <ScrollThumb />
        <Toast><ToastCheck><Check size={16} strokeWidth={3} /></ToastCheck>Login successful!</Toast>
      </AppArea>
      <Taskbar>
        <MlbSlot><Mlb /><Badge>5</Badge></MlbSlot>
        <TaskIcon><WinLogo /></TaskIcon>
        <TaskIcon><Search size={28} strokeWidth={2.200} color="#e8e8e8" /></TaskIcon>
        <TaskIcon><TaskView /></TaskIcon>
        <TaskIcon><Explorer /></TaskIcon>
        <TaskIcon><Edge /></TaskIcon>
        <TaskIcon><Store /></TaskIcon>
        <TaskIcon><Chrome /></TaskIcon>
        <TaskIcon><Chrome dev /></TaskIcon>
        <TaskIcon><Cmd /></TaskIcon>
        <TaskIcon><Excel /></TaskIcon>
        <TaskIcon><BraveLogo s={30} /></TaskIcon>
        <TaskIcon><Hourglass /></TaskIcon>
        <TaskIcon><Studio /></TaskIcon>
        <TaskIcon><VsCode /><RunningDot /></TaskIcon>
        <TaskIcon><Postman /></TaskIcon>
        <TaskIcon><FileIcon /></TaskIcon>
        <TaskIcon><PowerBi /></TaskIcon>
        <TaskIcon><Term /></TaskIcon>
        <TaskIcon><Xampp /></TaskIcon>
        <TaskIcon><SiPostgresql size={30} color="#4f7ea8" /></TaskIcon>
        <TaskIcon><PgAdmin /></TaskIcon>
        <TaskIcon><Idea /></TaskIcon>
        <TaskIcon><svg width="26" height="26" viewBox="0 0 26 26"><circle cx="13" cy="13" r="13" fill="#2a9ed6" /><SiTelegram x={5} y={5} size={16} color="#fff" /></svg></TaskIcon>
        <TaskDivider $ml={5} />
        <ActiveApp><BraveLogo s={28} mark /><ActiveDot /><ActivePill /></ActiveApp>
        <MoreSlot><Ellipsis size={26} strokeWidth={2.400} /></MoreSlot>
        <TaskDivider $ml={0} />
        <Tray>
          <TraySlot $w={48}><ChevronUp size={28} strokeWidth={2} /></TraySlot>
          <TraySlot $w={48}><Sync /></TraySlot>
          <TraySlot $w={48}><CloudOff /></TraySlot>
          <TraySlot $w={48}><Wifi size={26} strokeWidth={2} /></TraySlot>
          <TraySlot $w={24}><Volume2 size={26} strokeWidth={1.600} /></TraySlot>
          <TraySlot $w={48}><Battery /></TraySlot>
        </Tray>
        <Clock>8:55 PM<br />10/29/2025</Clock>
      </Taskbar>
    </Frame>
  );
}
